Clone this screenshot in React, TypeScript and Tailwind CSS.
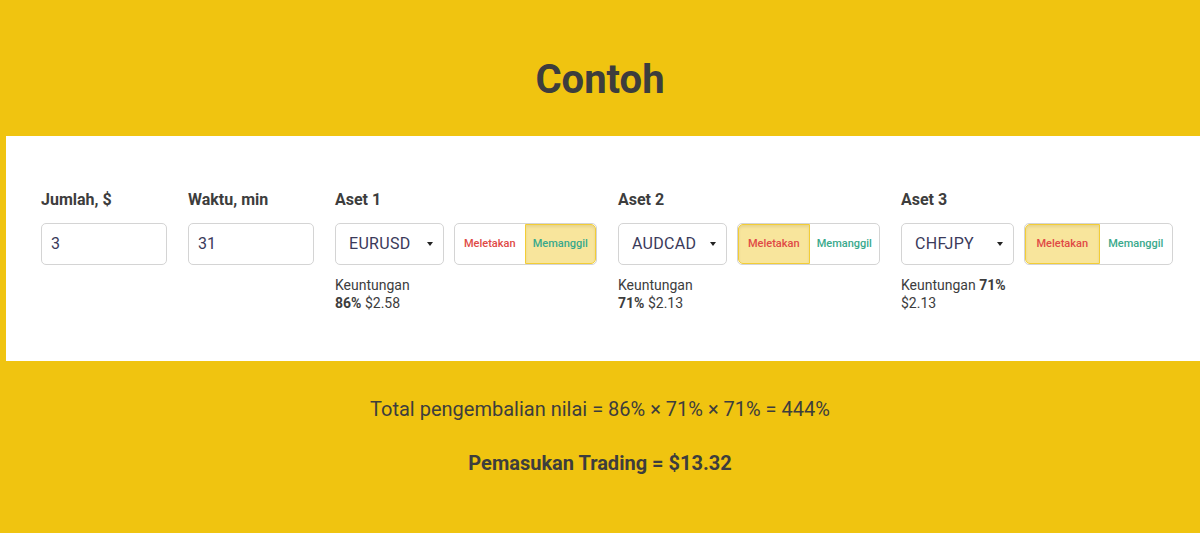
const font = { fontFamily: 'Roboto, "Noto Sans", sans-serif' }

interface AssetProps {
  label: string
  pair: string
  selectW: string
  toggleW: string
  active: 'put' | 'call'
  pct: string
  amount: string
  inline?: boolean
}

function Asset({ label, pair, selectW, toggleW, active, pct, amount, inline }: AssetProps) {
  const on = 'bg-[#f8e59c] border border-[#f3cd35] shadow-[inset_0_2px_3px_rgba(0,0,0,0.08)]'
  return (
    <div className="flex flex-col">
      <div className="text-[16px] font-bold h-[20px] leading-[20px] mb-[13px]">{label}</div>
      <div className="flex gap-[10px]">
        <div className={`${selectW} h-[42px] border border-[#d4d4d4] rounded-[5px] bg-white flex items-center justify-between pl-[13px] pr-[10px]`}>
          <span className="text-[16px] text-[#3a3a5a] tracking-[0.3px]">{pair}</span>
          <span className="w-0 h-0 border-l-[3px] border-r-[3px] border-t-[4px] border-l-transparent border-r-transparent border-t-[#222]" />
        </div>
        <div className={`${toggleW} h-[42px] border border-[#d4d4d4] rounded-[5px] bg-white flex overflow-hidden text-[11px] font-medium`}>
          <div className={`flex-1 flex items-center justify-center text-[#e04a45] rounded-l-[5px] ${active === 'put' ? on : ''}`}>Meletakan</div>
          <div className={`flex-1 flex items-center justify-center text-[#3aa98c] rounded-r-[5px] ${active === 'call' ? on : ''}`}>Memanggil</div>
        </div>
      </div>
      <div className="text-[14px] leading-[18px] mt-[11px] text-[#3d3d3d]">
        {inline ? (
          <>
            Keuntungan <b>{pct}</b>
            <br />
            {amount}
          </>
        ) : (
          <>
            Keuntungan
            <br />
            <b>{pct}</b> {amount}
          </>
        )}
      </div>
    </div>
  )
}

function Field({ label, value }: { label: string; value: string }) {
  return (
    <div className="flex flex-col w-[126px]">
      <div className="text-[16px] font-bold h-[20px] leading-[20px] mb-[13px]">{label}</div>
      <div className="h-[42px] border border-[#d4d4d4] rounded-[5px] bg-white flex items-center px-[9px] text-[16px] text-[#3a3a5a]">
        {value}
      </div>
    </div>
  )
}

export default function App() {
  return (
    <div className="w-[1200px] h-[533px] bg-[#f0c410] text-[#3d3d3d] overflow-hidden" style={font}>
      <div className="h-[136px] flex items-center justify-center pt-[24px]">
        <h1 className="text-[40px] font-bold">Contoh</h1>
      </div>
      <div className="ml-[6px] h-[225px] bg-white pt-[54px] pl-[35px] flex gap-[21px]">
        <Field label="Jumlah, $" value="3" />
        <Field label="Waktu, min" value="31" />
        <Asset label="Aset 1" pair="EURUSD" selectW="w-[109px]" toggleW="w-[143px]" active="call" pct="86%" amount="$2.58" />
        <Asset label="Aset 2" pair="AUDCAD" selectW="w-[109px]" toggleW="w-[143px]" active="put" pct="71%" amount="$2.13" />
        <Asset label="Aset 3" pair="CHFJPY" selectW="w-[113px]" toggleW="w-[149px]" active="put" pct="71%" amount="$2.13" inline />
      </div>
      <div className="flex flex-col items-center pt-[34px]">
        <p className="text-[20px] leading-[28px]">Total pengembalian nilai = 86% × 71% × 71% = 444%</p>
        <p className="text-[20px] leading-[28px] font-bold mt-[26px]">Pemasukan Trading = $13.32</p>
      </div>
    </div>
  )
}
